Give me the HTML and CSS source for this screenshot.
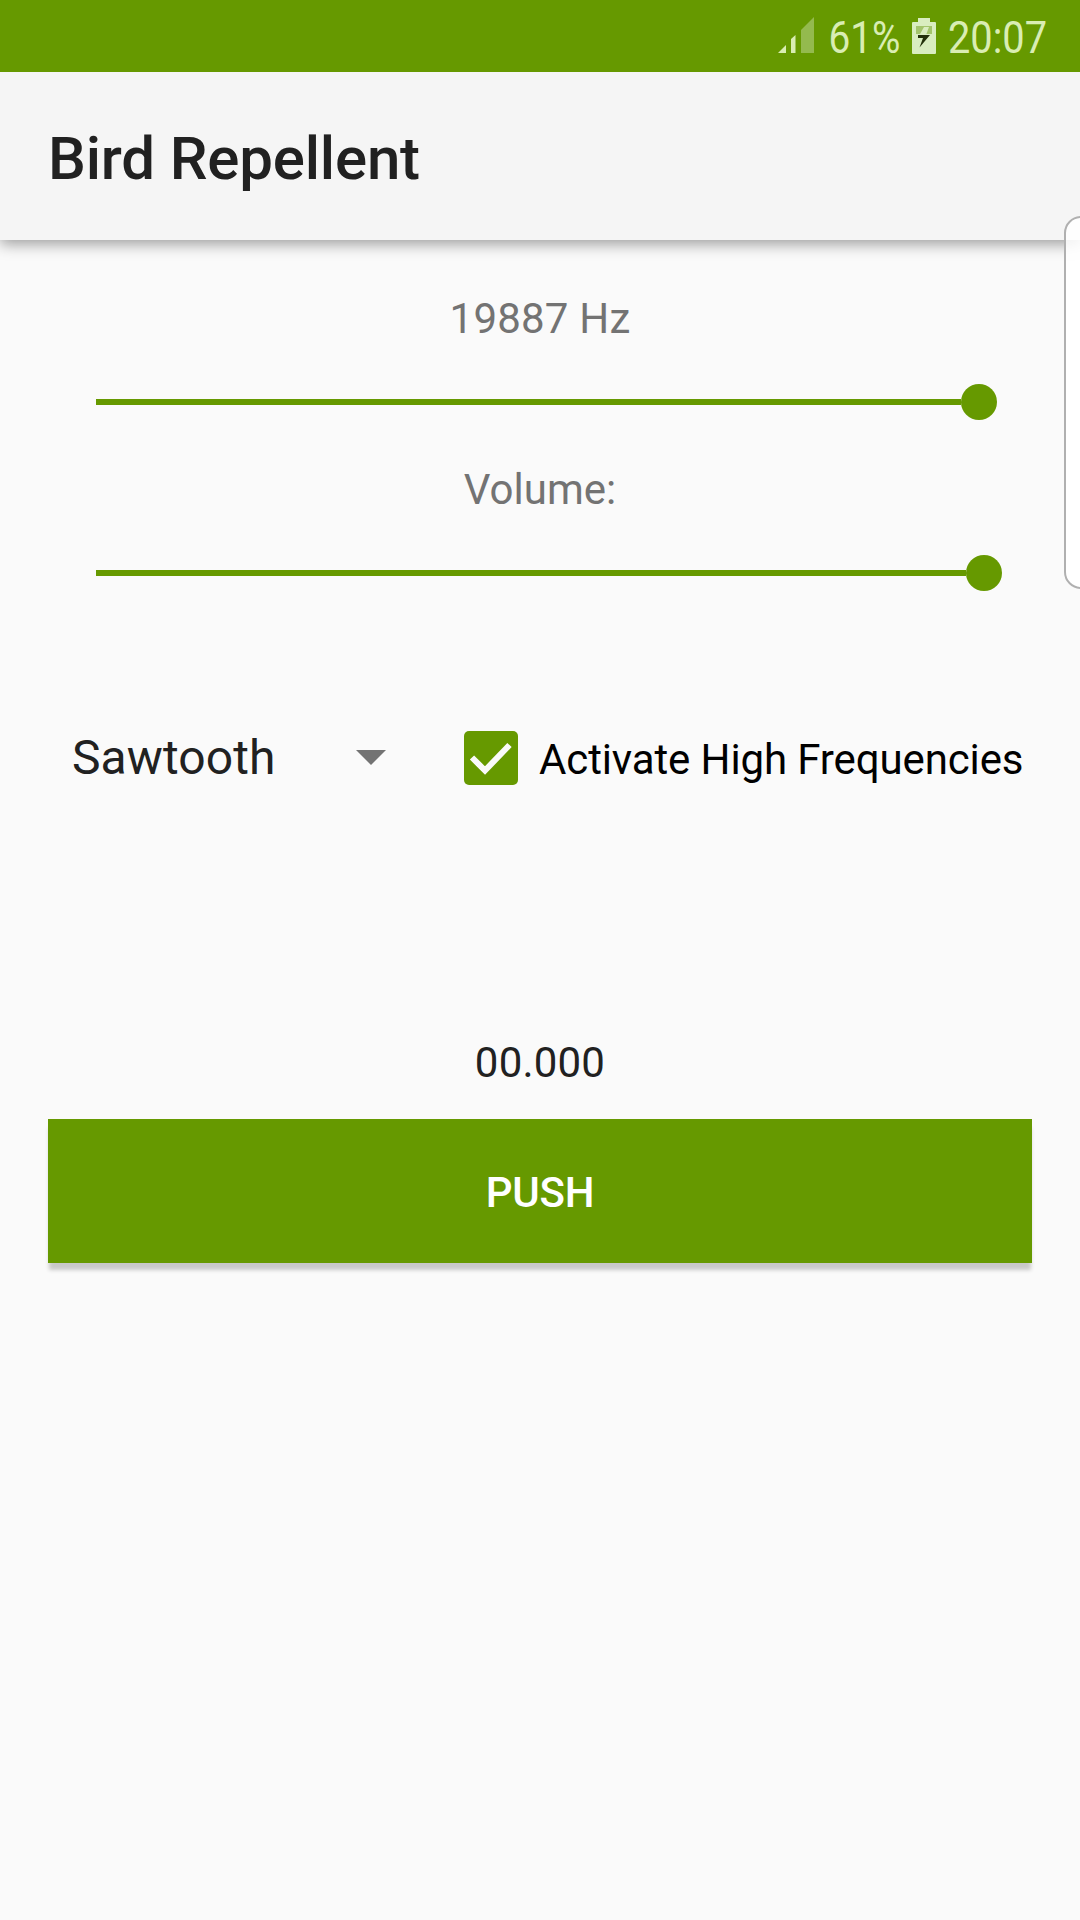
FILE: index.html
```html
<!DOCTYPE html>
<html>
<head>
	<meta charset="utf-8">
	<title>Bird Repellent</title>
	<link rel="stylesheet" href="styles.css">
</head>
<body>
	<div class="statusbar">
		<svg class="signal" width="36" height="37" viewBox="0 0 36 37">
			<path d="M0 36L8 28V36Z M13 36V22L17.500 18V36Z" fill="#d9edb3"/>
			<path d="M23 36V13L36 0V36Z" fill="#94ba4e"/>
		</svg>
		<svg class="percent" width="70" height="50">
			<text x="-1.500" y="38" textLength="72" lengthAdjust="spacingAndGlyphs">61%</text>
		</svg>
		<svg class="battery" width="24" height="36" viewBox="0 0 24 36">
			<path d="M6 4V0H18V4H23Q24 4 24 5V35Q24 36 23 36H1Q0 36 0 35V5Q0 4 1 4Z" fill="#d9edc0"/>
			<path d="M4 8H20V16H4Z" fill="#a3c46c"/>
			<path d="M12 9H17L14 17H7.500Z" fill="#d9edc0"/>
			<path d="M6 17H18L7.500 29.500L11 20H6Z" fill="#22300a"/>
		</svg>
		<svg class="clock" width="100" height="50">
			<text x="-1" y="38" textLength="99" lengthAdjust="spacingAndGlyphs">20:07</text>
		</svg>
	</div>
	<div class="toolbar">
		<h1>Bird Repellent</h1>
	</div>
	<div class="content">
		<div class="label num">19887 Hz</div>
		<div class="slider freq"><span class="track"></span><span class="thumb"></span></div>
		<div class="label">Volume:</div>
		<div class="slider"><span class="track"></span><span class="thumb"></span></div>
		<div class="options">
			<div class="spinner">
				<span>Sawtooth</span>
				<svg width="30" height="15" viewBox="0 0 30 15"><path d="M0 0H30L15 15Z" fill="#737373"/></svg>
			</div>
			<div class="check">
				<svg width="54" height="54" viewBox="0 0 54 54">
					<rect width="54" height="54" rx="5" fill="#669900"/>
					<path d="M8 26.500L21 39.500L45.500 14" fill="none" stroke="#fafafa" stroke-width="6"/>
				</svg>
				<span>Activate High Frequencies</span>
			</div>
		</div>
		<div class="timer num">00.000</div>
		<div class="push">PUSH</div>
	</div>
	<!-- edge panel handle, lies over the toolbar and the content -->
	<div class="edge"></div>
</body>
</html>
```

FILE: styles.css
```css
body,div,h1{margin: 0;padding: 0;}
body{
	position: relative;
	width: 1080px;
	height: 1920px;
	overflow: hidden;
	background: #fafafa;
	font: 42px/56px Roboto,sans-serif;
}
svg{display: block;flex: none;}
.statusbar{
	/*keeps the toolbar shadow underneath*/
	position: relative;
	display: flex;
	box-sizing: border-box;
	height: 72px;
	padding-left: 778px;
	background: #669900;
}
.statusbar text{font-size: 45px;fill: #d9edb3;}
.signal{margin-top: 17px;}
.percent{margin: 15px 0 0 16px;overflow: visible;}
.battery{margin: 18px 0 0 12px;}
.clock{margin: 15px 0 0 13px;overflow: visible;}
.toolbar{
	display: flex;
	align-items: center;
	height: 168px;
	padding-left: 48px;
	background: #f5f5f5;
	box-shadow: 0 4px 14px rgba(0,0,0,0.38);
}
.toolbar h1{
	padding-top: 5px;
	font-size: 60px;
	line-height: 72px;
	font-weight: 500;
	letter-spacing: -0.18px;
	color: #212121;
}
.content{padding: 51px 48px 0;}
.label{text-align: center;color: #737373;}
.num{letter-spacing: 0.2px;}
.slider{
	display: flex;
	align-items: center;
	height: 36px;
	margin: 37px 30px 42px 48px;
}
.track{flex: 1;height: 6px;background: #669900;}
.thumb{
	width: 36px;
	height: 36px;
	border-radius: 50%;
	background: #669900;
}
.freq{margin-right: 35px;}
.options{
	display: flex;
	align-items: center;
	height: 60px;
	margin-top: 137px;
}
.spinner{
	display: flex;
	align-items: center;
	justify-content: space-between;
	width: 314px;
	padding-left: 24px;
	font-size: 48px;
	color: #212121;
}
.spinner span{letter-spacing: 0.1px;}
.spinner svg{margin-bottom: 1px;}
.check{
	display: flex;
	align-items: center;
	margin-left: 78px;
	color: #000;
	white-space: nowrap;
}
.check span{margin: 3px 0 0 21px;letter-spacing: -0.12px;}
.timer{
	margin-top: 247px;
	text-align: center;
	color: #212121;
}
.push{
	height: 144px;
	margin-top: 28px;
	line-height: 148px;
	text-align: center;
	font-weight: 500;
	letter-spacing: -0.2px;
	color: #fff;
	background: #669900;
	box-shadow: 0 8px 4px -1px rgba(0,0,0,0.2);
}
.edge{
	position: absolute;
	top: 216px;
	right: -18px;
	width: 30px;
	height: 369px;
	border: 2px solid #b0b0b0;
	border-radius: 18px;
	background: rgba(255,255,255,0.85);
}
```
